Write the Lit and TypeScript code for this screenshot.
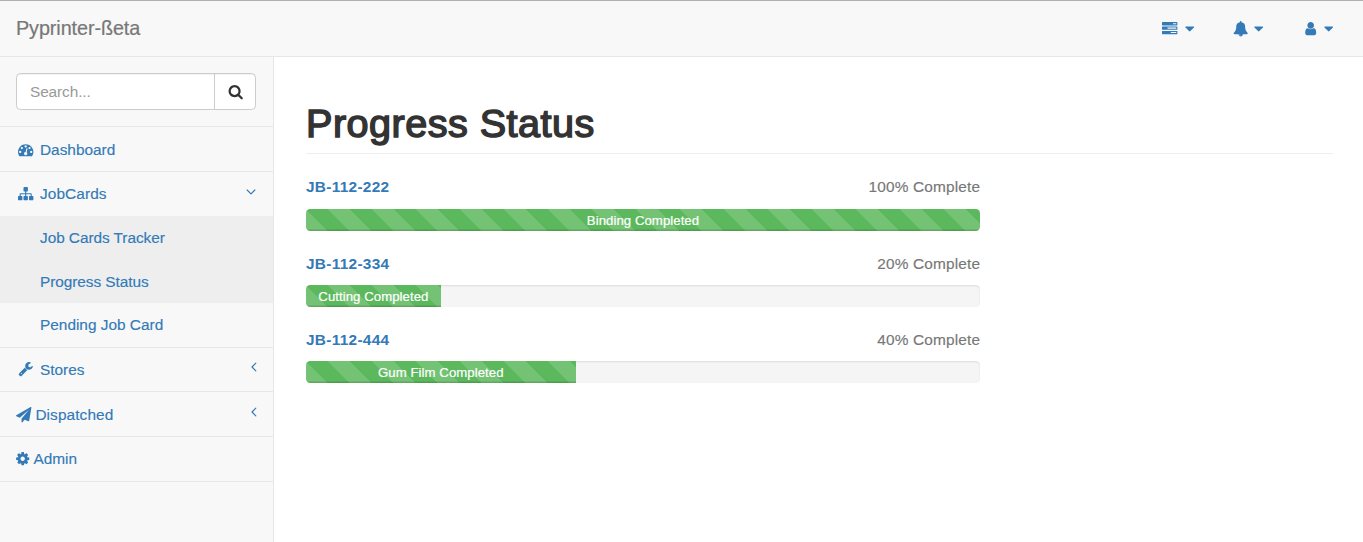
import { LitElement, html, css, svg, nothing } from "lit";
import { customElement, property } from "lit/decorators.js";

const ICONS: Record<string, string> = {
  search: "M1216 832q0-185-131.5-316.5t-316.5-131.5-316.5 131.5-131.5 316.5 131.5 316.5 316.5 131.5 316.5-131.5 131.5-316.5zm512 832q0 52-38 90t-90 38q-54 0-90-38l-343-342q-179 124-399 124-143 0-273.5-55.5t-225-150-150-225-55.5-273.5 55.5-273.5 150-225 225-150 273.5-55.5 273.5 55.5 225 150 150 225 55.5 273.5q0 220-124 399l343 343q37 37 37 90z",
  user: "M1536 1399q0 109-62.5 187t-150.5 78h-854q-88 0-150.5-78t-62.5-187q0-85 8.5-160.5t31.5-152 58.5-131 94-89 134.5-34.5q131 128 313 128t313-128q76 0 134.5 34.5t94 89 58.5 131 31.5 152 8.5 160.5zm-256-887q0 159-112.5 271.5t-271.5 112.5-271.5-112.5-112.5-271.5 112.5-271.5 271.5-112.5 271.5 112.5 112.5 271.5z",
  bell: "M912 1696q0-16-16-16-59 0-101.5-42.5t-42.5-101.5q0-16-16-16t-16 16q0 73 51.5 124.5t124.5 51.5q16 0 16-16zm816-288q0 52-38 90t-90 38h-448q0 106-75 181t-181 75-181-75-75-181h-448q-52 0-90-38t-38-90q50-42 91-88t85-119.5 74.5-158.5 50-206 19.5-260q0-152 117-282.5t307-158.5q-8-19-8-39 0-40 28-68t68-28 68 28 28 68q0 20-8 39 190 28 307 158.5t117 282.5q0 139 19.5 260t50 206 74.5 158.5 85 119.5 91 88z",
  caret: "M1408 704q0 26-19 45l-448 448q-19 19-45 19t-45-19l-448-448q-19-19-19-45t19-45 45-19h896q26 0 45 19t19 45z",
  tasks: "M1024 1408h640v-128h-640v128zm-384-512h1024v-128h-1024v128zm640-512h384v-128h-384v128zm512 832v256q0 26-19 45t-45 19h-1664q-26 0-45-19t-19-45v-256q0-26 19-45t45-19h1664q26 0 45 19t19 45zm0-512v256q0 26-19 45t-45 19h-1664q-26 0-45-19t-19-45v-256q0-26 19-45t45-19h1664q26 0 45 19t19 45zm0-512v256q0 26-19 45t-45 19h-1664q-26 0-45-19t-19-45v-256q0-26 19-45t45-19h1664q26 0 45 19t19 45z",
  dashboard: "M384 1152q0-53-37.5-90.5t-90.5-37.5-90.5 37.5-37.5 90.5 37.5 90.5 90.5 37.5 90.5-37.5 37.5-90.5zm192-448q0-53-37.5-90.5t-90.5-37.5-90.5 37.5-37.5 90.5 37.5 90.5 90.5 37.5 90.5-37.5 37.5-90.5zm428 481l101-382q6-26-7.5-48.5t-38.5-29.5-48 6.5-30 39.5l-101 382q-60 5-107 43.5t-63 98.5q-20 77 20 146t117 89 146-20 89-117q16-60-6-117t-72-91zm660-33q0-53-37.5-90.5t-90.5-37.5-90.5 37.5-37.5 90.5 37.5 90.5 90.5 37.5 90.5-37.5 37.5-90.5zm-640-640q0-53-37.5-90.5t-90.5-37.5-90.5 37.5-37.5 90.5 37.5 90.5 90.5 37.5 90.5-37.5 37.5-90.5zm448 192q0-53-37.5-90.5t-90.5-37.5-90.5 37.5-37.5 90.5 37.5 90.5 90.5 37.5 90.5-37.5 37.5-90.5zm320 448q0 261-141 483-19 29-54 29h-1402q-35 0-54-29-141-221-141-483 0-182 71-348t191-286 286-191 348-71 348 71 286 191 191 286 71 348z",
  sitemap: "M1792 1248v320q0 40-28 68t-68 28h-320q-40 0-68-28t-28-68v-320q0-40 28-68t68-28h96v-192h-512v192h96q40 0 68 28t28 68v320q0 40-28 68t-68 28h-320q-40 0-68-28t-28-68v-320q0-40 28-68t68-28h96v-192h-512v192h96q40 0 68 28t28 68v320q0 40-28 68t-68 28h-320q-40 0-68-28t-28-68v-320q0-40 28-68t68-28h96v-192q0-52 38-90t90-38h512v-192h-96q-40 0-68-28t-28-68v-320q0-40 28-68t68-28h320q40 0 68 28t28 68v320q0 40-28 68t-68 28h-96v192h512q52 0 90 38t38 90v192h96q40 0 68 28t28 68z",
  wrench: "M448 1472q0-26-19-45t-45-19-45 19-19 45 19 45 45 19 45-19 19-45zm644-420l-682 682q-37 37-90 37-52 0-91-37l-106-108q-38-36-38-90 0-53 38-91l681-681q39 98 114.5 173.5t173.5 114.5zm634-435q0 39-23 106-47 134-164.5 217.5t-258.5 83.5q-185 0-316.5-131.5t-131.5-316.5 131.5-316.5 316.5-131.5q58 0 121.5 16.5t107.5 46.5q16 11 16 28t-16 28l-293 169v224l193 107q5-3 79-48.5t135.5-81 70.5-35.5q15 0 23.5 10t8.5 25z",
  plane: "M1764 11q33 24 27 64l-256 1536q-5 29-32 45-14 8-31 8-11 0-24-5l-453-185-242 295q-18 23-49 23-13 0-22-4-19-7-30.5-23.5t-11.5-36.5v-349l864-1059-1069 925-395-162q-37-14-40-55-2-40 32-59l1664-960q15-9 32-9 20 0 36 11z",
  gear: "M1152 896q0-106-75-181t-181-75-181 75-75 181 75 181 181 75 181-75 75-181zm512-109v222q0 12-8 23t-20 13l-185 28q-19 54-39 91 35 50 107 138 10 12 10 25t-9 23q-27 37-99 108t-94 71q-12 0-26-9l-138-108q-44 23-91 38-16 136-29 186-7 28-36 28h-222q-14 0-24.5-8.5t-11.5-21.5l-28-184q-49-16-90-37l-141 107q-10 9-25 9-14 0-25-11-126-114-165-168-7-10-7-23 0-12 8-23 15-21 51-66.5t54-70.5q-27-50-41-99l-183-27q-13-2-21-12.5t-8-23.5v-222q0-12 8-23t19-13l186-28q14-46 39-92-40-57-107-138-10-12-10-24 0-10 9-23 26-36 98.5-107.5t94.5-71.5q13 0 26 10l138 107q44-23 91-38 16-136 29-186 7-28 36-28h222q14 0 24.5 8.5t11.5 21.5l28 184q49 16 90 37l142-107q9-9 24-9 13 0 25 10 129 119 165 170 7 8 7 22 0 12-8 23-15 21-51 66.5t-54 70.5q26 50 41 98l183 28q13 2 21 12.5t8 23.5z",
};

@customElement("fa-icon")
export class FaIcon extends LitElement {
  @property() name = "";
  static styles = css`
    :host { display: block; flex: none; width: 15.4px; height: 15.4px; }
    svg { display: block; width: 100%; height: 100%; overflow: visible; fill: currentColor; }
    .line { fill: none; stroke: currentColor; stroke-width: 150; stroke-linecap: round; stroke-linejoin: round; }
  `;
  render() {
    const body =
      this.name === "angle-down"
        ? svg`<path class="line" d="M400 640L896 1130L1392 640"></path>`
        : this.name === "angle-left"
          ? svg`<path class="line" d="M1130 400L640 896L1130 1392"></path>`
          : svg`<path d=${ICONS[this.name] ?? ""}></path>`;
    return html`<svg viewBox="0 0 1792 1792" aria-hidden="true">${body}</svg>`;
  }
}

interface Entry {
  label: string;
  icon: string;
  cls: string;
  arrow?: string;
  children?: { label: string; shaded: boolean; cls: string }[];
}

const MENU: Entry[] = [
  { label: "Dashboard", icon: "dashboard", cls: "wide" },
  {
    label: "JobCards", icon: "sitemap", cls: "wide raised loose", arrow: "angle-down",
    children: [
      { label: "Job Cards Tracker", shaded: true, cls: "snug" },
      { label: "Progress Status", shaded: true, cls: "snug" },
      { label: "Pending Job Card", shaded: false, cls: "" },
    ],
  },
  { label: "Stores", icon: "wrench", cls: "wide raised short", arrow: "angle-left" },
  { label: "Dispatched", icon: "plane", cls: "tight loose", arrow: "angle-left" },
  { label: "Admin", icon: "gear", cls: "tight gear raised" },
];

const JOBS = [
  { id: "JB-112-222", percent: 100, stage: "Binding Completed" },
  { id: "JB-112-334", percent: 20, stage: "Cutting Completed" },
  { id: "JB-112-444", percent: 40, stage: "Gum Film Completed" },
];

@customElement("app-root")
export class AppRoot extends LitElement {
  static styles = css`
    :host {
      display: flex; flex-direction: column; box-sizing: border-box; height: 542px;
      font: 15.4px/22px "Liberation Sans", Arial, sans-serif; color: #333; background: #fff;
      border-top: 1px solid #afafaf; overflow: hidden;
    }
    * { box-sizing: border-box; }
    .nav {
      flex: none; height: 56px; background: #f8f8f8; border-bottom: 1px solid #e7e7e7;
      display: flex; align-items: center; justify-content: space-between; padding: 0 27px 0 16px;
    }
    .brand { font-size: 19.8px; color: #777; margin-top: -1px; letter-spacing: -0.08px; -webkit-text-stroke: 0.2px #777; }
    .tools { display: flex; gap: 36px; color: #337ab7; }
    .tool { display: flex; gap: 3px; }
    .tool.tasks { gap: 4px; }
    .tool.user { gap: 2.5px; }
    .body { flex: 1; display: flex; min-height: 0; }
    .side { flex: none; width: 274px; background: #f8f8f8; border-right: 1px solid #e7e7e7; }
    .searchbox { height: 70px; padding: 16px 17px 16px 16px; border-bottom: 1px solid #e7e7e7; }
    .group {
      display: flex; height: 37px; background: #fff; border: 1px solid #ccc; border-radius: 4.4px;
      box-shadow: inset 0 1px 1px rgba(0, 0, 0, 0.06);
    }
    .field { flex: 1; padding: 7px 13px; color: #999; letter-spacing: -0.1px; }
    .go { width: 41px; border-left: 1px solid #ccc; display: grid; place-items: center; color: #333; padding-left: 1px; }
    .menu { list-style: none; margin: 0; padding: 0; color: #337ab7; -webkit-text-stroke: 0.15px #337ab7; }
    .item { border-bottom: 1px solid #e7e7e7; }
    .row { display: flex; align-items: center; height: 44px; padding: 2px 15px 0 16px; }
    .icon { margin-top: -1px; }
    .wide .icon { margin-left: 2px; margin-right: 6.6px; }
    .tight .icon { margin-right: 4px; }
    .gear .icon { margin-left: -1px; margin-right: 3px; }
    .arrow { margin-left: auto; width: 14px; height: 14px; margin-top: -7px; }
    .arrow[name="angle-left"] { margin-right: -3px; }
    .raised .row { padding-top: 0; }
    .raised .arrow { margin-top: -5px; }
    .short .row { height: 43px; }
    .loose .label { letter-spacing: 0.1px; }
    .snug { letter-spacing: -0.06px; }
    .sub { list-style: none; margin: 0; padding: 0; }
    .leaf { height: 44px; padding: 11px 0 0 40px; }
    .leaf.shaded { background: #eee; height: 43.5px; }
    .main { flex: 1; padding: 44px 30px 0 32px; }
    .title {
      margin: 0 0 22.4px; height: 53px; font-size: 39.6px; line-height: 45px; font-weight: 400;
      letter-spacing: 0.48px; border-bottom: 1px solid #eee; -webkit-text-stroke: 1.5px #333; color: #333;
    }
    .jobs { width: 674px; display: flex; flex-direction: column; gap: 21.8px; }
    .head { display: flex; justify-content: space-between; height: 22px; margin-bottom: 10.4px; }
    .id { color: #337ab7; font-weight: 700; letter-spacing: 0.3px; }
    .pct { color: #777; letter-spacing: 0.17px; margin-right: -0.17px; -webkit-text-stroke: 0.15px #777; }
    .track {
      height: 22px; background: #f5f5f5; border-radius: 4.4px; overflow: hidden;
      box-shadow: inset 0 1px 2px rgba(0, 0, 0, 0.1);
    }
    .fill {
      height: 22px; line-height: 24px; font-size: 13.2px; color: #fff; text-align: center;
      letter-spacing: 0.05px; -webkit-text-stroke: 0.2px #fff;
      background-color: #5cb85c; box-shadow: inset 0 -1.5px 0 rgba(0, 0, 0, 0.15);
      background-image: linear-gradient(45deg, rgba(255, 255, 255, 0.15) 25%, transparent 25%, transparent 50%, rgba(255, 255, 255, 0.15) 50%, rgba(255, 255, 255, 0.15) 75%, transparent 75%, transparent);
      background-size: 44px 44px; background-position: 22px 0;
    }
  `;

  private renderEntry(e: Entry) {
    return html`<li class="item ${e.cls}">
      <div class="row">
        <fa-icon class="icon" name=${e.icon}></fa-icon><span class="label">${e.label}</span>
        ${e.arrow ? html`<fa-icon class="arrow" name=${e.arrow}></fa-icon>` : nothing}
      </div>
      ${e.children
        ? html`<ul class="sub">
            ${e.children.map((c) => html`<li class="leaf ${c.shaded ? "shaded" : ""}"><span class=${c.cls}>${c.label}</span></li>`)}
          </ul>`
        : nothing}
    </li>`;
  }

  render() {
    return html`
      <header class="nav">
        <span class="brand">Pyprinter-ßeta</span>
        <div class="tools">
          ${["tasks", "bell", "user"].map(
            (n) => html`<span class="tool ${n}"><fa-icon name=${n}></fa-icon><fa-icon name="caret"></fa-icon></span>`,
          )}
        </div>
      </header>
      <div class="body">
        <aside class="side">
          <div class="searchbox">
            <div class="group">
              <span class="field">Search...</span>
              <span class="go"><fa-icon name="search"></fa-icon></span>
            </div>
          </div>
          <ul class="menu">${MENU.map((e) => this.renderEntry(e))}</ul>
        </aside>
        <main class="main">
          <h1 class="title">Progress Status</h1>
          <div class="jobs">
            ${JOBS.map(
              (j) => html`<section>
                <div class="head"><span class="id">${j.id}</span><span class="pct">${j.percent}% Complete</span></div>
                <div class="track"><div class="fill" style="width:${j.percent}%">${j.stage}</div></div>
              </section>`,
            )}
          </div>
        </main>
      </div>
    `;
  }
}
